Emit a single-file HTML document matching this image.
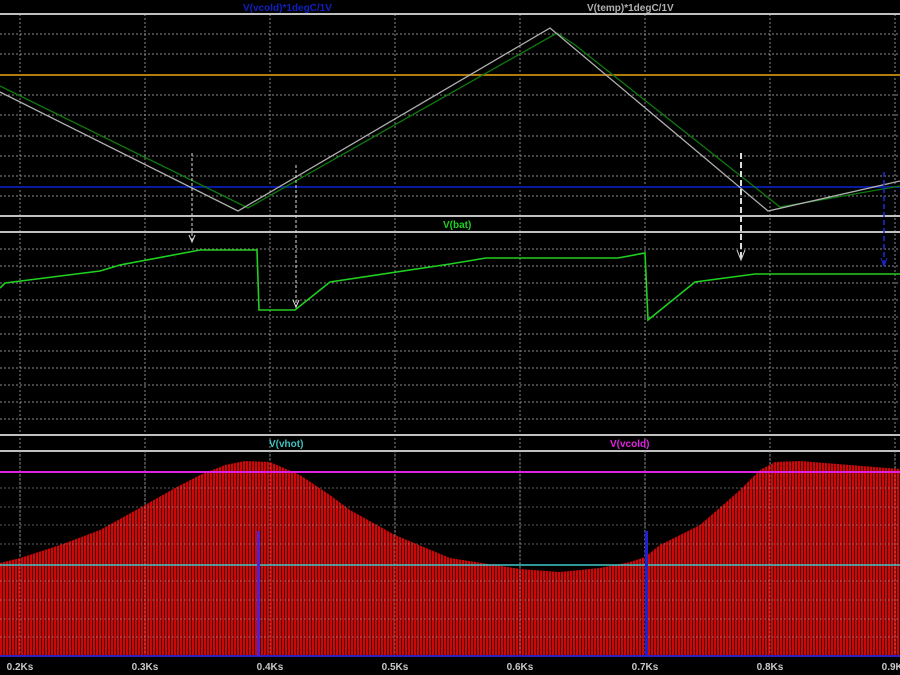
<!DOCTYPE html>
<html><head><meta charset="utf-8"><style>
html,body{margin:0;padding:0;background:#000;width:900px;height:675px;overflow:hidden}
svg{display:block}
text{font-family:"Liberation Sans",sans-serif;font-size:10px;font-weight:bold}
</style></head><body>
<svg width="900" height="675" viewBox="0 0 900 675" xmlns="http://www.w3.org/2000/svg">
<defs>
<pattern id="st" width="3" height="10" patternUnits="userSpaceOnUse">
<rect width="3" height="10" fill="#4a0000"/>
<rect width="2" height="10" fill="#cc0808"/>
</pattern>
</defs>
<rect width="900" height="675" fill="#000"/>
<g stroke="#8a8a8a" stroke-width="1" stroke-dasharray="2,2">
<path d="M20 14V656M145 14V656M270 14V656M395 14V656M520 14V656M645 14V656M770 14V656M895 14V656"/>
<path d="M0 34H900M0 54H900M0 95H900M0 115H900M0 136H900M0 156H900M0 176H900M0 196H900"/>
<path d="M0 249H900M0 266H900M0 283H900M0 300H900M0 317H900M0 334H900M0 351H900M0 368H900M0 385H900M0 402H900M0 419H900"/>
</g>
<g stroke="#c0c0c0" stroke-width="2">
<path d="M0 14H900M0 216H900M0 232H900M0 435H900M0 451H900"/>
</g>
<!-- panel1 -->
<path d="M0 75H900" stroke="#b07c10" stroke-width="2"/>
<path d="M0 187H900" stroke="#0a1aa0" stroke-width="2"/>
<polyline points="0,86 248,208 557,33 575,45 780,207 900,186" fill="none" stroke="#0c7a0c" stroke-width="1.3"/>
<polyline points="0,92 238,211 550,28 768,211 900,181" fill="none" stroke="#b0b0b0" stroke-width="1.3"/>
<!-- panel2 -->
<polyline points="0,288 5,283 100,271 120,265 200,250 257,250 259,310 295,310 330,282 450,264 486,258 618,258 645,253 648,320 695,282 755,274 900,274" fill="none" stroke="#20d020" stroke-width="1.6"/>
<!-- arrows -->
<g stroke="#ddd" stroke-width="1" stroke-dasharray="3,2" fill="none">
<path d="M192 153V240M296 165V308"/>
<path d="M741 153V258" stroke-width="2" stroke-dasharray="6,3"/>
</g>
<g stroke="#ddd" fill="none"><path d="M189 235L192 242L195 235M293 300L296 307L299 300M737 250L741 260L745 250"/></g>
<path d="M884 172V265" stroke="#1a2ae0" stroke-width="1.5" stroke-dasharray="5,3"/>
<path d="M881 258L884 266L887 258" stroke="#1a2ae0" fill="none"/>
<!-- panel3 -->
<polygon fill="url(#st)" points="0,563 20,558 60,545 100,530 145,505 175,488 200,475 225,465 245,461 270,462 300,475 330,495 350,510 395,535 450,558 520,569 560,572 600,568 630,562 645,557 660,545 700,525 740,490 760,470 775,462 800,461 850,465 900,469 900,656 0,656"/>
<g stroke="#999" stroke-width="1" stroke-dasharray="2,2" opacity="0.6">
<path d="M0 488H900M0 507H900M0 525H900M0 544H900M0 581H900M0 600H900M0 619H900M0 637H900"/>
<path d="M20 451V656M145 451V656M270 451V656M395 451V656M520 451V656M645 451V656M770 451V656M895 451V656"/>
</g>
<path d="M0 472H900" stroke="#e020e0" stroke-width="2"/>
<path d="M0 565H900" stroke="#40c8c8" stroke-width="1.5"/>
<path d="M0 656H900" stroke="#3020c0" stroke-width="2"/>
<rect x="257" y="531" width="3" height="125" fill="#5020d0"/>
<rect x="645" y="531" width="3" height="125" fill="#2020d0"/>
<!-- labels -->
<text x="243" y="11" fill="#1020c0">V(vcold)*1degC/1V</text>
<text x="587" y="11" fill="#b0b0b0">V(temp)*1degC/1V</text>
<text x="443" y="228" fill="#20d020">V(bat)</text>
<text x="269" y="447" fill="#40c0c0">V(vhot)</text>
<text x="610" y="447" fill="#e020e0">V(vcold)</text>
<g fill="#c8c8c8" text-anchor="middle">
<text x="20" y="670">0.2Ks</text><text x="145" y="670">0.3Ks</text><text x="270" y="670">0.4Ks</text><text x="395" y="670">0.5Ks</text><text x="520" y="670">0.6Ks</text><text x="645" y="670">0.7Ks</text><text x="770" y="670">0.8Ks</text><text x="895" y="670">0.9Ks</text>
</g>
</svg>
</body></html>
